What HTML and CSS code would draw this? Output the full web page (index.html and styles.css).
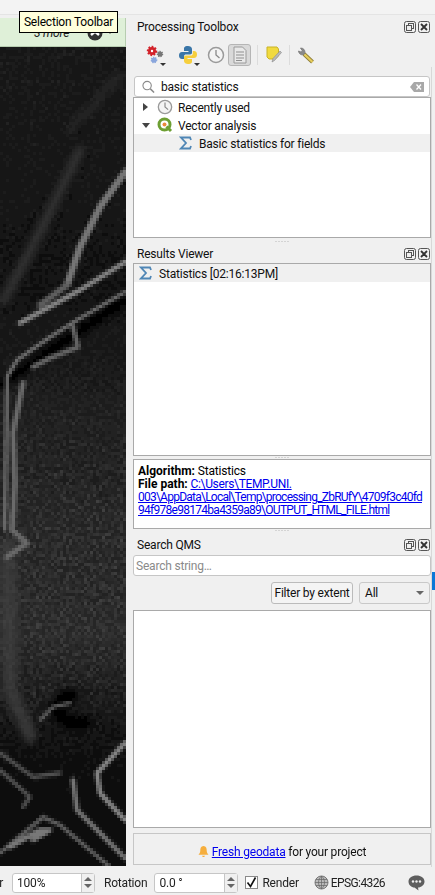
FILE: index.html
```html
<!DOCTYPE html>
<html lang="en">
  <head>
    <meta charset="UTF-8" />
    <meta name="viewport" content="width=device-width, initial-scale=1.0" />
    <title>QGIS panels</title>
    <link rel="stylesheet" href="styles.css">
  </head>
  <body>
    <div class="topbar"></div>
    <div class="tooltip">Selection Toolbar</div>

    <div class="main">
      <div class="canvas-col">
        <div class="message-bar">
          <span class="more">3 more</span>
          <svg class="more-icon" width="16" height="16" viewBox="0 0 16 16">
            <circle cx="8" cy="8" r="7.5" fill="#333" />
            <path d="M4 10 L8 6.5 L12 10" fill="none" stroke="#fff" stroke-width="2.4" />
          </svg>
          <span class="more-arrow"></span>
        </div>
        <svg class="map" width="126" height="820" viewBox="0 47 126 820" preserveAspectRatio="none">
          <defs>
            <filter id="grain" x="0" y="0" width="100%" height="100%">
              <feTurbulence type="fractalNoise" baseFrequency="0.3" numOctaves="2" seed="7" />
              <feColorMatrix type="matrix" values="0 0 0 0 1  0 0 0 0 1  0 0 0 0 1  2.2 0 0 0 -0.85" />
            </filter>
            <filter id="soft" x="-10%" y="-10%" width="120%" height="120%"><feGaussianBlur stdDeviation="1.3" /></filter>
            <filter id="softer" x="-20%" y="-20%" width="140%" height="140%"><feGaussianBlur stdDeviation="3.5" /></filter>
            <filter id="pixels" filterUnits="userSpaceOnUse" x="0" y="47" width="126" height="820">
              <feFlood x="1" y="48" width="1" height="1" />
              <feComposite x="0" y="47" width="3" height="3" />
              <feTile result="tile" />
              <feComposite in="SourceGraphic" in2="tile" operator="in" />
              <feMorphology operator="dilate" radius="1" />
            </filter>
            <linearGradient id="ground" x1="0" y1="0" x2="0" y2="1">
              <stop offset="0" stop-color="#161616" />
              <stop offset="0.3" stop-color="#101010" />
              <stop offset="0.45" stop-color="#1c1c1c" />
              <stop offset="0.72" stop-color="#262626" />
              <stop offset="0.83" stop-color="#0f0f0f" />
              <stop offset="1" stop-color="#070707" />
            </linearGradient>
            <linearGradient id="grain-fade" x1="0" y1="0" x2="0" y2="1">
              <stop offset="0" stop-color="#fff" stop-opacity="0.35" />
              <stop offset="0.38" stop-color="#fff" stop-opacity="0.35" />
              <stop offset="0.6" stop-color="#fff" stop-opacity="1" />
              <stop offset="0.8" stop-color="#fff" stop-opacity="0.8" />
              <stop offset="0.88" stop-color="#fff" stop-opacity="0.2" />
            </linearGradient>
            <mask id="grain-mask" maskUnits="userSpaceOnUse" x="0" y="47" width="126" height="820">
              <rect x="0" y="47" width="126" height="820" fill="url(#grain-fade)" />
            </mask>
          </defs>
          <g filter="url(#pixels)">
            <rect x="0" y="47" width="126" height="820" fill="url(#ground)" />
            <g mask="url(#grain-mask)">
              <rect x="0" y="47" width="126" height="820" filter="url(#grain)" opacity="0.17" />
            </g>
            <g fill="none" stroke-linejoin="round" stroke-linecap="round" filter="url(#softer)">
              <path d="M80 150 L44 224 L4 300" stroke="#303030" stroke-width="10" />
              <path d="M120 75 L70 130" stroke="#262626" stroke-width="9" />
              <path d="M8 545 L10 690 L30 735" stroke="#3e3e3e" stroke-width="15" opacity="0.8" />
              <path d="M125 300 L0 385" stroke="#050505" stroke-width="10" />
              <path d="M72 695 C48 700 55 728 85 722" stroke="#050505" stroke-width="14" />
            </g>
            <g fill="none" stroke-linejoin="round" stroke-linecap="round" filter="url(#soft)">
              <path d="M125 172 L100 207 L80 247 L67 285" stroke="#767676" stroke-width="7" />
              <path d="M125 262 L80 290 L20 323" stroke="#858585" stroke-width="5" />
              <path d="M67 285 L40 305" stroke="#5e5e5e" stroke-width="6" />
              <path d="M125 292 L77 320 L50 337 L17 360 L7 377 L5 530" stroke="#747474" stroke-width="3.5" />
              <path d="M73 327 L78 347 L50 358 L33 367" stroke="#666" stroke-width="5" />
              <path d="M23 383 L13 433 L15 483 L12 530 L27 543 L7 557" stroke="#6a6a6a" stroke-width="5.5" />
              <path d="M40 720 L53 707 L70 703" stroke="#6a6a6a" stroke-width="3" />
              <path d="M0 753 L33 777 L60 773" stroke="#555" stroke-width="4" />
              <path d="M0 770 L30 797 L23 807" stroke="#555" stroke-width="4" />
              <path d="M125 743 L97 773 L100 793 L125 820" stroke="#858585" stroke-width="5" />
              <path d="M73 780 L77 810 L125 858" stroke="#747474" stroke-width="5" />
              <path d="M0 853 L43 817 L60 825 L110 867" stroke="#636363" stroke-width="4" />
              <path d="M10 847 L40 830 L50 830 L33 840" stroke="#787878" stroke-width="5" />
            </g>
          </g>
        </svg>
      </div>

      <div class="dock">
        <div class="panel-title">
          <span>Processing Toolbox</span>
          <span class="title-btns">
            <svg width="12" height="12" viewBox="0 0 12 12"><rect x=".5" y=".5" width="11" height="11" rx="2" fill="none" stroke="#555" /><rect x="4.5" y="2.5" width="5" height="5" fill="none" stroke="#555" /><rect x="2.5" y="4.5" width="5" height="5" fill="#eee" stroke="#555" /></svg>
            <svg width="12" height="12" viewBox="0 0 12 12"><rect x=".5" y=".5" width="11" height="11" rx="2" fill="none" stroke="#555" /><path d="M3 3 L9 9 M9 3 L3 9" stroke="#333" stroke-width="1.8" /></svg>
          </span>
        </div>

        <div class="tools">
          <span class="tool wide">
            <svg width="20" height="20" viewBox="0 0 20 20"><circle cx="7" cy="6" r="4" fill="#d2222a" stroke="#d2222a" stroke-width="2.4" stroke-dasharray="1.6 1.4" /><circle cx="7" cy="6" r="1.2" fill="#fff" /><circle cx="15" cy="9" r="2.5" fill="#777" stroke="#777" stroke-width="1.5" stroke-dasharray="1.2 1" /><circle cx="9" cy="15" r="2.6" fill="#8aa6dc" stroke="#8aa6dc" stroke-width="1.5" stroke-dasharray="1.2 1" /></svg>
            <i class="drop"></i>
          </span>
          <span class="tool wide py">
            <svg width="20" height="20" viewBox="0 0 20 20"><path d="M10 1 C6 1 6 3 6 4 V6 H10.500 V7 H4 C2 7 1 8.500 1 10.500 C1 12.500 2 14 4 14 H6 V11.500 C6 10 7 9.500 8 9.500 H12 C13.500 9.500 14 8.500 14 7.500 V4 C14 2 12 1 10 1 Z" fill="#3a76a8" /><path d="M10 19 C14 19 14 17 14 16 V14 H9.500 V13 H16 C18 13 19 11.500 19 9.500 C19 7.500 18 6 16 6 H14.800 V8 C14.800 10 14 10.500 12.500 10.500 H8 C6.500 10.500 6 11.500 6 12.500 V16 C6 18 8 19 10 19 Z" fill="#f6cf3d" /></svg>
            <i class="drop"></i>
          </span>
          <span class="tool">
            <svg width="18" height="18" viewBox="0 0 18 18"><circle cx="9" cy="9" r="7.500" fill="#f4f4f4" stroke="#9a9a9a" stroke-width="1.500" /><path d="M9 4 V9 L12.500 12" fill="none" stroke="#8a8a8a" stroke-width="1.300" /></svg>
          </span>
          <span class="tool active">
            <svg width="14" height="18" viewBox="0 0 14 18"><path d="M1 1 H9.500 L13 4.500 V17 H1 Z" fill="#e8e8e8" stroke="#9a9a9a" /><path d="M3 6 H11 M3 9 H11 M3 12 H11 M3 14.500 H9" stroke="#8f8f8f" /></svg>
          </span>
          <i class="tool-sep"></i>
          <span class="tool">
            <svg width="16" height="18" viewBox="0 0 16 18"><path d="M1 1 H11 L12.500 3 V10 L9 13 H3 L1 11 Z" fill="#f1da3f" stroke="#c9b327" /><path d="M6 16 L7 12.500 L14 5 L15.500 6.500 L8.500 14.500 Z" fill="#b9b9b9" stroke="#8a8a8a" stroke-width=".6" /></svg>
          </span>
          <i class="tool-sep"></i>
          <span class="tool">
            <svg width="18" height="18" viewBox="0 0 18 18"><path d="M7 8 L15.500 16" stroke="#8a7a35" stroke-width="4" /><path d="M7 8 L15.500 16" stroke="#e6cd5c" stroke-width="2.400" /><path d="M1.500 5 C2 8 4 9.500 7 8.500 L8 6.500 C8 4 6.500 2 3.500 2 L5.500 5 L4 6 Z" fill="#8a8a8a" stroke="#777" stroke-width=".8" /></svg>
          </span>
        </div>

        <div class="search-box">
          <svg width="13" height="14" viewBox="0 0 14 14"><circle cx="5.500" cy="5.500" r="4.500" fill="none" stroke="#8a8a8a" stroke-width="1.200" /><path d="M9 9 L13 13" stroke="#8a8a8a" stroke-width="1.600" /></svg>
          <span class="search-text">basic statistics</span>
          <svg class="clear" width="14" height="10" viewBox="0 0 14 10"><path d="M4 0 H14 V10 H4 L0 5 Z" fill="#a8a8a8" /><path d="M6.500 2.500 L11 7.500 M11 2.500 L6.500 7.500" stroke="#fff" stroke-width="1.300" /></svg>
        </div>

        <div class="box tree">
          <div class="row">
            <i class="arrow-right"></i>
            <svg width="16" height="16" viewBox="0 0 18 18"><circle cx="9" cy="9" r="7.500" fill="#f4f4f4" stroke="#9a9a9a" stroke-width="1.500" /><path d="M9 4 V9 L12.500 12" fill="none" stroke="#8a8a8a" stroke-width="1.300" /></svg>
            <span>Recently used</span>
          </div>
          <div class="row">
            <i class="arrow-down"></i>
            <svg width="16" height="16" viewBox="0 0 16 16"><circle cx="7.500" cy="7.500" r="5.500" fill="#fff" stroke="#6d9f33" stroke-width="3" /><circle cx="7.500" cy="7.500" r="2" fill="#e8883a" /><path d="M9.500 9.500 L14 14" stroke="#6d9f33" stroke-width="3" /></svg>
            <span>Vector analysis</span>
          </div>
          <div class="row selected child">
            <svg width="13" height="14" viewBox="0 0 13 14"><path d="M12 4 L11 1.500 H2 L7 7 L2 12.500 H11 L12 10" fill="none" stroke="#4f86b5" stroke-width="1.800" /></svg>
            <span>Basic statistics for fields</span>
          </div>
        </div>
        <div class="splitter"></div>

        <div class="panel-title">
          <span>Results Viewer</span>
          <span class="title-btns">
            <svg width="12" height="12" viewBox="0 0 12 12"><rect x=".5" y=".5" width="11" height="11" rx="2" fill="none" stroke="#555" /><rect x="4.500" y="2.500" width="5" height="5" fill="none" stroke="#555" /><rect x="2.500" y="4.500" width="5" height="5" fill="#eee" stroke="#555" /></svg>
            <svg width="12" height="12" viewBox="0 0 12 12"><rect x=".5" y=".5" width="11" height="11" rx="2" fill="none" stroke="#555" /><path d="M3 3 L9 9 M9 3 L3 9" stroke="#333" stroke-width="1.800" /></svg>
          </span>
        </div>
        <div class="box results">
          <div class="row selected result">
            <svg width="13" height="14" viewBox="0 0 13 14"><path d="M12 4 L11 1.500 H2 L7 7 L2 12.500 H11 L12 10" fill="none" stroke="#4f86b5" stroke-width="1.800" /></svg>
            <span>Statistics [02:16:13PM]</span>
          </div>
        </div>
        <div class="splitter tight"></div>
        <div class="box info">
          <div><b>Algorithm:</b> Statistics</div>
          <div><b>File path:</b> <a href="#">C:\Users\TEMP.UNI.<br /><span class="path-mid">003\AppData\Local\Temp\processing_ZbRUfY\4709f3c40fd</span><br /><span class="path-end">94f978e98174ba4359a89\OUTPUT_HTML_FILE.html</span></a></div>
        </div>
        <div class="splitter tight"></div>

        <div class="panel-title third">
          <span>Search QMS</span>
          <span class="title-btns">
            <svg width="12" height="12" viewBox="0 0 12 12"><rect x=".5" y=".5" width="11" height="11" rx="2" fill="none" stroke="#555" /><rect x="4.500" y="2.500" width="5" height="5" fill="none" stroke="#555" /><rect x="2.500" y="4.500" width="5" height="5" fill="#eee" stroke="#555" /></svg>
            <svg width="12" height="12" viewBox="0 0 12 12"><rect x=".5" y=".5" width="11" height="11" rx="2" fill="none" stroke="#555" /><path d="M3 3 L9 9 M9 3 L3 9" stroke="#333" stroke-width="1.800" /></svg>
          </span>
        </div>
        <div class="qms-input">Search string…</div>
        <div class="qms-filter">
          <span class="btn">Filter by extent</span>
          <span class="combo"><span>All</span><i class="combo-arrow"></i></span>
        </div>
        <div class="box qms-list"></div>
        <div class="fresh">
          <svg width="11" height="13" viewBox="0 0 12 13"><path d="M6 0.500 C3 1 2.500 3 2.500 5.500 C2.500 8 1.500 9 0.500 10 H11.500 C10.500 9 9.500 8 9.500 5.500 C9.500 3 9 1 6 0.500 Z" fill="#f6ae3c" /><path d="M4.500 11 H7.500 C7.500 13 4.500 13 4.500 11 Z" fill="#f6ae3c" /></svg>
          <span><a href="#">Fresh geodata</a> for your project</span>
        </div>
      </div>

      <div class="edge"><i class="edge-mark"></i></div>
    </div>

    <div class="statusbar">
      <span class="cut">er</span>
      <span class="spin first"><span>100%</span><span class="spin-btns"><i class="up"></i><i class="down"></i></span></span>
      <span class="status-label">Rotation</span>
      <span class="spin second"><span>0.0 °</span><span class="spin-btns"><i class="up"></i><i class="down"></i></span></span>
      <span class="check">
        <svg width="11" height="11" viewBox="0 0 11 11"><path d="M1.500 5.500 L4.500 9.500 L9.500 .5" fill="none" stroke="#111" stroke-width="1.600" /></svg>
      </span>
      <span class="status-label render">Render</span>
      <svg class="globe" width="15" height="15" viewBox="0 0 15 15"><circle cx="7.500" cy="7.500" r="6.500" fill="#bbb" stroke="#777" /><path d="M1 7.500 H14 M7.500 1 V14 M2 4.500 H13 M2 10.500 H13 M7.500 1 C3.500 5 3.500 10 7.500 14 M7.500 1 C11.500 5 11.500 10 7.500 14" fill="none" stroke="#666" stroke-width=".7" /></svg>
      <span class="epsg">EPSG:4326</span>
      <svg class="chat" width="17" height="16" viewBox="0 0 17 16"><path d="M8.500 0.500 C13 0.500 16.500 3 16.500 6.500 C16.500 10 13 12.500 10 12.500 L10.500 15.500 L6.500 12.500 C3.500 12.500 0.500 10 0.500 6.500 C0.500 3 4 0.500 8.500 0.500 Z" fill="#5e5e5e" /><circle cx="5" cy="6.500" r="1.200" fill="#eee" /><circle cx="8.500" cy="6.500" r="1.200" fill="#eee" /><circle cx="12" cy="6.500" r="1.200" fill="#eee" /></svg>
    </div>
  </body>
</html>
```

FILE: styles.css
```css
html,
body {
  margin: 0;
  padding: 0;
  height: 100%;
}
body {
  position: relative;
  display: flex;
  flex-direction: column;
  width: 435px;
  height: 895px;
  overflow: hidden;
  background-color: #f0f0f0;
  color: #111111;
  font-family: "Roboto", "Open Sans", sans-serif;
  font-size: 12px;
  letter-spacing: -0.2px;
  line-height: 18px;
}
svg {
  flex-shrink: 0;
}
i {
  display: block;
}
a {
  color: #0000ee;
}

.topbar {
  height: 15px;
  flex-shrink: 0;
  margin-bottom: 3px;
  background-color: #f3f3f3;
  border-bottom: 1px solid #e4e4e4;
  box-sizing: border-box;
}
.tooltip {
  position: absolute;
  top: 11px;
  left: 19px;
  width: 99px;
  height: 22px;
  box-sizing: border-box;
  border: 1px solid #000000;
  background-color: #ffffdc;
  color: #000000;
  text-align: center;
  line-height: 20px;
  white-space: nowrap;
  z-index: 5;
}

.main {
  display: flex;
  flex: 1;
  min-height: 0;
}
.canvas-col {
  display: flex;
  flex-direction: column;
  width: 126px;
  flex-shrink: 0;
}
.message-bar {
  display: flex;
  align-items: center;
  height: 29px;
  box-sizing: border-box;
  flex-shrink: 0;
  padding-left: 34px;
  background-color: #dff0d8;
  border-bottom: 1px solid #b7cdb0;
  border-right: 1px solid #b7cdb0;
}
.more {
  width: 53px;
  font-style: italic;
  color: #222222;
  padding-top: 2px;
}
.more-icon {
  margin-top: 2px;
}
.more-arrow {
  width: 0;
  height: 0;
  margin-left: 5px;
  border-left: 2px solid transparent;
  border-right: 2px solid transparent;
  border-top: 3px solid #333333;
}
.map {
  display: block;
  flex-shrink: 0;
}

.dock {
  display: flex;
  flex-direction: column;
  width: 298px;
  margin-left: 7px;
  flex-shrink: 0;
}
.panel-title {
  display: flex;
  justify-content: space-between;
  align-items: center;
  height: 18px;
  padding-left: 4px;
  flex-shrink: 0;
}
.title-btns {
  display: flex;
  gap: 2px;
  margin-right: 1px;
}
.tools {
  display: flex;
  align-items: center;
  gap: 1px;
  height: 26px;
  margin-top: 6px;
  padding-left: 8px;
  flex-shrink: 0;
}
.tool {
  display: flex;
  align-items: center;
  justify-content: center;
  position: relative;
  width: 23px;
  height: 22px;
  box-sizing: border-box;
}
.tool.wide {
  width: 32px;
  justify-content: flex-start;
  padding-left: 4px;
}
.tool.py {
  width: 29px;
}
.tool.active {
  margin-right: 2px;
  background-color: #d9d9d9;
  border: 1px solid #b5b5b5;
  border-radius: 3px;
}
.drop {
  position: absolute;
  right: 7px;
  bottom: 0;
  border-left: 3px solid transparent;
  border-right: 3px solid transparent;
  border-top: 3px solid #333333;
}
.py .drop {
  right: 3px;
}
.tool-sep {
  width: 1px;
  height: 20px;
  margin: 0 3px;
  background-color: #dcdcdc;
}
.search-box {
  display: flex;
  align-items: center;
  gap: 6px;
  height: 21px;
  margin: 8px 1px 0 1px;
  padding: 0 5px 0 7px;
  box-sizing: border-box;
  background-color: #ffffff;
  border: 1px solid #c6c6c6;
  border-radius: 3px;
  flex-shrink: 0;
}
.search-text {
  flex: 1;
}
.box {
  background-color: #ffffff;
  border: 1px solid #a9a9a9;
  box-sizing: border-box;
  flex-shrink: 0;
}
.row {
  display: flex;
  align-items: center;
  height: 18px;
  padding-left: 9px;
  gap: 5px;
  white-space: nowrap;
}
.row span {
  padding-top: 2px;
}
.row.selected {
  background-color: #f0f0f0;
}
.row.child {
  padding-left: 45px;
  gap: 7px;
}
.row.result {
  padding-left: 5px;
  gap: 7px;
}
.arrow-right {
  border-left: 5px solid #444444;
  border-top: 4px solid transparent;
  border-bottom: 4px solid transparent;
  margin-right: 4px;
}
.arrow-down {
  border-top: 5px solid #444444;
  border-left: 4px solid transparent;
  border-right: 4px solid transparent;
  margin-left: -1px;
  margin-right: 2px;
}
.tree {
  height: 141px;
}
.splitter {
  height: 7px;
  flex-shrink: 0;
  background: radial-gradient(circle, #b8b8b8 0.7px, transparent 0.9px) center / 3px 3px repeat-x;
  background-clip: content-box;
  padding: 0 142px;
}
.splitter.tight {
  height: 3px;
}
.results {
  height: 193px;
}
.info {
  height: 70px;
  padding: 5px 4px;
  line-height: 13px;
  color: #000000;
  white-space: nowrap;
}
.info a {
  letter-spacing: -0.34px;
}
.info .path-mid {
  letter-spacing: -0.76px;
}
.info .path-end {
  letter-spacing: -0.72px;
}
.info b {
  font-weight: 700;
  letter-spacing: 0;
}
.panel-title.third {
  margin-top: 4px;
}
.qms-input {
  height: 21px;
  margin-top: 1px;
  padding-left: 2px;
  box-sizing: border-box;
  background-color: #ffffff;
  border: 1px solid #c6c6c6;
  border-radius: 3px;
  color: #8a8a8a;
  line-height: 20px;
  flex-shrink: 0;
}
.qms-filter {
  display: flex;
  justify-content: flex-end;
  gap: 6px;
  margin-top: 6px;
  padding-right: 1px;
  flex-shrink: 0;
}
.btn {
  width: 82px;
  height: 22px;
  box-sizing: border-box;
  background-color: #f4f4f4;
  border: 1px solid #bbbbbb;
  border-radius: 3px;
  text-align: center;
  line-height: 20px;
  white-space: nowrap;
}
.combo {
  display: flex;
  justify-content: space-between;
  align-items: center;
  width: 71px;
  height: 22px;
  box-sizing: border-box;
  padding: 0 5px;
  background-color: #f0f0f0;
  border: 1px solid #c9c9c9;
  border-radius: 3px;
}
.combo-arrow {
  border-top: 4px solid #666666;
  border-left: 4px solid transparent;
  border-right: 4px solid transparent;
}
.qms-list {
  height: 218px;
  margin-top: 6px;
}
.fresh {
  display: flex;
  justify-content: center;
  align-items: center;
  gap: 3px;
  height: 32px;
  margin-top: 5px;
  padding-top: 5px;
  box-sizing: border-box;
  border: 1px solid #c6c6c6;
  flex-shrink: 0;
}
.edge {
  position: relative;
  flex: 1;
  margin-top: 49px;
  border-left: 1px solid #d8d8d8;
}
.edge-mark {
  position: absolute;
  top: 505px;
  left: 0;
  width: 3px;
  height: 18px;
  background-color: #0a78d7;
}

.statusbar {
  display: flex;
  align-items: center;
  height: 28px;
  padding-top: 3px;
  box-sizing: border-box;
  flex-shrink: 0;
  white-space: nowrap;
  color: #222222;
}
.cut {
  width: 8px;
  flex-shrink: 0;
  text-indent: -7px;
}
.spin {
  display: flex;
  justify-content: space-between;
  align-items: center;
  height: 20px;
  box-sizing: border-box;
  padding-left: 4px;
  background-color: #ffffff;
  border: 1px solid #c6c6c6;
  border-radius: 3px;
}
.spin.first {
  width: 83px;
  margin-left: 4px;
}
.spin.second {
  width: 84px;
  margin-left: 7px;
}
.spin-btns {
  display: flex;
  flex-direction: column;
  justify-content: center;
  gap: 3px;
  width: 13px;
  height: 18px;
  padding-left: 1px;
  box-sizing: border-box;
  background-color: #f0f0f0;
  border-left: 1px solid #c6c6c6;
}
.up {
  width: 0;
  margin-left: 1px;
  border-bottom: 4px solid #666666;
  border-left: 4px solid transparent;
  border-right: 4px solid transparent;
}
.down {
  width: 0;
  margin-left: 1px;
  border-top: 4px solid #666666;
  border-left: 4px solid transparent;
  border-right: 4px solid transparent;
}
.status-label {
  margin-left: 9px;
}
.check {
  display: flex;
  align-items: center;
  justify-content: center;
  width: 13px;
  height: 13px;
  margin-left: 7px;
  box-sizing: border-box;
  background-color: #ffffff;
  border: 1px solid #8a8a8a;
}
.status-label.render {
  margin-left: 4px;
}
.globe {
  margin-left: 15px;
}
.epsg {
  margin-left: 2px;
  letter-spacing: -0.6px;
}
.chat {
  margin-left: 23px;
}
```
